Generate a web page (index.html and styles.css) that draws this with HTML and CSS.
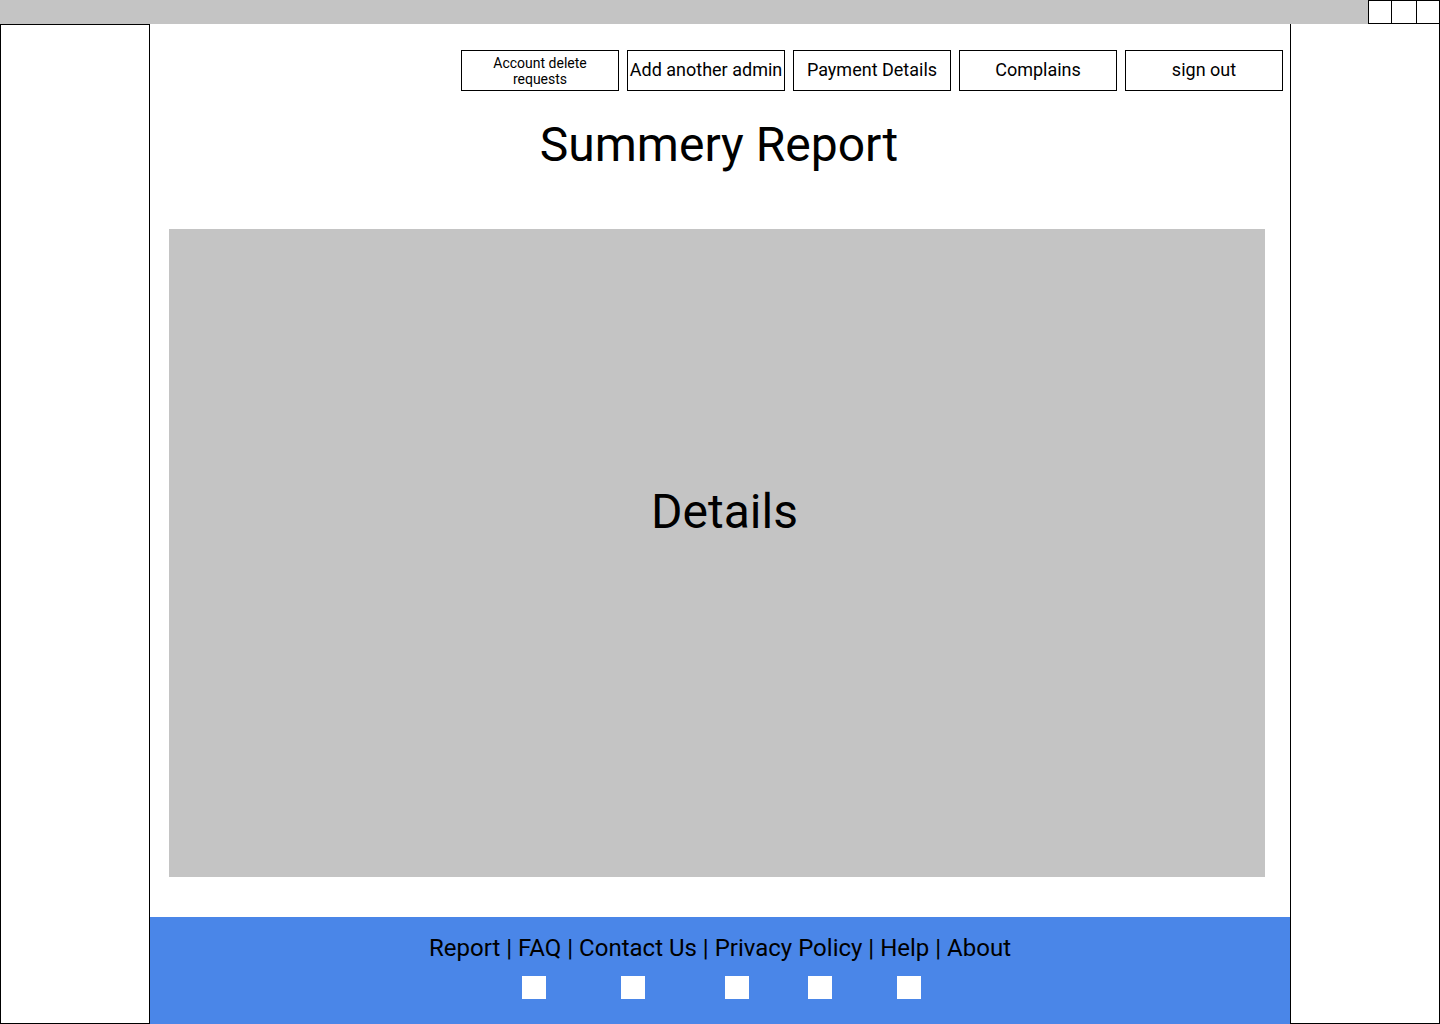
FILE: index.html
```html
<!DOCTYPE html>
<html lang="en">
<head>
<meta charset="utf-8">
<title>Summery Report</title>
<link rel="stylesheet" href="styles.css">
</head>
<body>
  <div class="topbar">
    <div class="winctl">
      <span class="wbox wbox-a"></span>
      <span class="wbox wbox-b"></span>
      <span class="wbox wbox-c"></span>
    </div>
  </div>
  <div class="frame">
    <aside class="side side-left"></aside>
    <main class="main">
      <nav class="nav">
        <a class="btn btn-small">Account delete<br>requests</a>
        <a class="btn">Add another admin</a>
        <a class="btn">Payment Details</a>
        <a class="btn">Complains</a>
        <a class="btn">sign out</a>
      </nav>
      <h1 class="title">Summery Report</h1>
      <section class="details">
        <span class="details-text">Details</span>
      </section>
      <footer class="footer">
        <div class="links">Report | FAQ | Contact Us | Privacy Policy | Help | About</div>
        <div class="socials">
          <span class="sq"></span>
          <span class="sq"></span>
          <span class="sq"></span>
          <span class="sq"></span>
          <span class="sq"></span>
        </div>
      </footer>
    </main>
    <aside class="side side-right"></aside>
  </div>
</body>
</html>
```

FILE: styles.css
```css
* { box-sizing: border-box; }

html, body {
  margin: 0;
  padding: 0;
  background: #ffffff;
  font-family: Roboto, "Liberation Sans", Arial, sans-serif;
  color: #000000;
}

body {
  width: 1440px;
  height: 1024px;
  overflow: hidden;
}

.topbar {
  height: 24px;
  background: #c4c4c4;
  display: flex;
  justify-content: flex-end;
  position: relative;
  z-index: 2;
}

.winctl {
  display: flex;
  width: 72px;
  height: 24px;
}

.wbox {
  display: block;
  height: 24px;
  background: #ffffff;
  border: 1px solid #000000;
}
.wbox-a { width: 24px; }
.wbox-b { width: 26px; margin-left: -1px; }
.wbox-c { width: 24px; margin-left: -1px; }

.frame {
  display: flex;
  height: 1000px;
}

.side {
  width: 150px;
  flex: 0 0 150px;
  border: 1px solid #000000;
  background: #ffffff;
}

.side-right {
  border-top: none;
}

.main {
  width: 1140px;
  flex: 0 0 1140px;
  display: flex;
  flex-direction: column;
}

.nav {
  display: flex;
  justify-content: flex-end;
  gap: 8px;
  padding: 26px 7px 0 0;
}

.btn {
  width: 158px;
  height: 41px;
  border: 1px solid #000000;
  display: flex;
  align-items: center;
  justify-content: center;
  text-align: center;
  font-size: 18px;
  line-height: 21px;
  white-space: nowrap;
  color: #000000;
  padding-bottom: 2px;
}

.btn-small {
  font-size: 14px;
  line-height: 16px;
  padding-bottom: 0;
  padding-top: 1px;
}

.title {
  margin: 26px 0 0 0;
  font-size: 48px;
  line-height: 56px;
  font-weight: 400;
  text-align: center;
  padding-right: 2px;
}

.details {
  margin: 56px 25px 0 19px;
  height: 648px;
  background: #c4c4c4;
  display: flex;
  justify-content: center;
  align-items: flex-start;
  padding: 255px 0 0 15px;
}

.details-text {
  font-size: 48px;
  line-height: 56px;
}

.footer {
  margin-top: 40px;
  flex: 1;
  background: #4a86e8;
  padding-top: 17px;
}

.links {
  font-size: 24px;
  line-height: 28px;
  text-align: center;
}

.socials {
  display: flex;
  justify-content: center;
  margin-top: 14px;
  padding-left: 3px;
}

.sq {
  display: block;
  width: 24px;
  height: 23px;
  background: #ffffff;
}
.sq:nth-child(2) { margin-left: 75px; }
.sq:nth-child(3) { margin-left: 80px; }
.sq:nth-child(4) { margin-left: 59px; }
.sq:nth-child(5) { margin-left: 65px; }
```
